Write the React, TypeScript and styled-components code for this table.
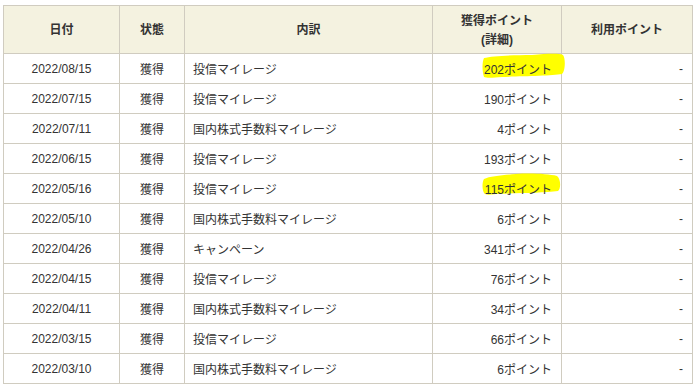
import styled, { createGlobalStyle } from 'styled-components';

const GlobalStyle = createGlobalStyle`
  body {
    margin: 0;
    background: #fff;
    font-family: "Liberation Sans", "Noto Sans CJK JP", sans-serif;
    font-size: 12px;
    color: #333;
  }
`

type Row = {
  date: string;
  status: string;
  detail: string;
  points: number;
  marked?: 'a' | 'b';
};

const rows: Row[] = [
  { date: '2022/08/15', status: '獲得', detail: '投信マイレージ', points: 202, marked: 'a' },
  { date: '2022/07/15', status: '獲得', detail: '投信マイレージ', points: 190 },
  { date: '2022/07/11', status: '獲得', detail: '国内株式手数料マイレージ', points: 4 },
  { date: '2022/06/15', status: '獲得', detail: '投信マイレージ', points: 193 },
  { date: '2022/05/16', status: '獲得', detail: '投信マイレージ', points: 115, marked: 'b' },
  { date: '2022/05/10', status: '獲得', detail: '国内株式手数料マイレージ', points: 6 },
  { date: '2022/04/26', status: '獲得', detail: 'キャンペーン', points: 341 },
  { date: '2022/04/15', status: '獲得', detail: '投信マイレージ', points: 76 },
  { date: '2022/04/11', status: '獲得', detail: '国内株式手数料マイレージ', points: 34 },
  { date: '2022/03/15', status: '獲得', detail: '投信マイレージ', points: 66 },
  { date: '2022/03/10', status: '獲得', detail: '国内株式手数料マイレージ', points: 6 },
];

// hand-drawn highlighter strokes over the points
const Marker = ({ kind }: { kind: 'a' | 'b' }) =>
  kind === 'a' ? (
    <MarkerSvg width="84" height="26" style={{ left: 49, top: -1 }} viewBox="0 0 84 26">
      <path
        d="M2 5 C 10 3, 30 2, 50 2 C 64 1, 76 0, 81 2 C 84 6, 83 19, 80 21 C 70 23, 40 23, 20 24 C 10 25, 4 25, 2 24 C 0 18, 0 9, 2 5 Z"
        fill="#ffff00"
      />
    </MarkerSvg>
  ) : (
    <MarkerSvg width="80" height="24" style={{ left: 49, top: -1 }} viewBox="0 0 80 24">
      <path
        d="M2 6 C 8 3, 22 2, 34 1 C 50 0, 66 1, 75 3 C 79 6, 79 16, 76 18 C 62 20, 34 20, 14 21 C 7 22, 3 22, 2 20 C 0 16, 0 9, 2 6 Z"
        fill="#ffff00"
      />
    </MarkerSvg>
  );

export default function App() {
  return (
    <>
      <GlobalStyle />
      <Page>
        <Table>
          <colgroup>
            <col style={{ width: 116 }} />
            <col style={{ width: 65 }} />
            <col style={{ width: 248 }} />
            <col style={{ width: 129 }} />
            <col style={{ width: 131 }} />
          </colgroup>
          <thead>
            <tr>
              <Th>日付</Th>
              <Th>状態</Th>
              <Th>内訳</Th>
              <Th>
                獲得ポイント
                <br />
                (詳細)
              </Th>
              <Th>利用ポイント</Th>
            </tr>
          </thead>
          <tbody>
            {rows.map((r) => (
              <tr key={r.date + r.detail}>
                <Td align="center">{r.date}</Td>
                <Td align="center">{r.status}</Td>
                <Td align="left">{r.detail}</Td>
                <Td align="right" $relative>
                  {r.marked && <Marker kind={r.marked} />}
                  <CellText>{r.points}ポイント</CellText>
                </Td>
                <Td align="right">-</Td>
              </tr>
            ))}
          </tbody>
        </Table>
      </Page>
    </>
  );
}

const Page = styled.div`
  padding: 5px 0 0 3px;
`

const Table = styled.table`
  width: 690px;
  border-collapse: collapse;
  table-layout: fixed;
`

const Th = styled.th`
  height: 45px;
  padding: 2px 4px 0;
  border: 1px solid #d0ccc0;
  background: #f4f2e0;
  font-weight: 700;
  font-size: 12px;
  line-height: 19px;
  text-align: center;
  color: #333;
`

const Td = styled.td<{ align: 'left' | 'center' | 'right'; $relative?: boolean }>`
  position: ${(p) => (p.$relative ? 'relative' : 'static')};
  height: 29px;
  padding: 0 ${(p) => (p.align === 'right' ? '9px' : '0')} 0 ${(p) => (p.align === 'left' ? '8px' : '0')};
  border: 1px solid #d0ccc0;
  text-align: ${(p) => p.align};
  vertical-align: middle;
  white-space: nowrap;
  font-size: 12px;
  color: #333;
`

const CellText = styled.span`
  position: relative;
  z-index: 1;
`

const MarkerSvg = styled.svg`
  position: absolute;
  z-index: 0;
  overflow: visible;
  pointer-events: none;
`
